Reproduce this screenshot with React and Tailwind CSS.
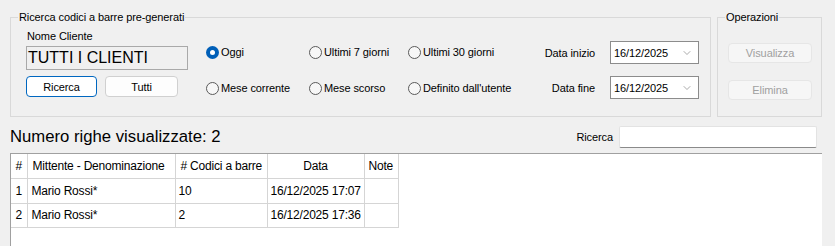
import React from 'react';
import { ChevronDown } from 'lucide-react';

const Radio = ({ checked, label }) => (
    <label className="flex items-center h-[16px] whitespace-nowrap">
        {checked ? (
            <span className="w-[13px] h-[13px] rounded-full bg-[#005fb8] flex items-center justify-center mr-[2px]">
                <span className="w-[5px] h-[5px] rounded-full bg-white" />
            </span>
        ) : (
            <span className="w-[13px] h-[13px] rounded-full border border-[#5a5a5a] bg-[#f7f7f7] mr-[2px]" />
        )}
        <span>{label}</span>
    </label>
);

const DateBox = ({ value }) => (
    <div className="w-[89px] h-[23px] bg-white border border-[#8c8c8c] flex items-center justify-between pl-[3px] pr-[5px]">
        <span>{value}</span>
        <ChevronDown className="w-[12px] h-[12px] text-[#707070]" strokeWidth={1.2} />
    </div>
);

const rows = [
    { n: 1, name: 'Mario Rossi*', count: '10', date: '16/12/2025 17:07', h: 'h-[25px]' },
    { n: 2, name: 'Mario Rossi*', count: '2', date: '16/12/2025 17:36', h: 'h-[24px]' },
];

export default function App() {
    return (
        <div className="w-[835px] h-[246px] bg-[#f0f0f0] overflow-hidden text-[11px] leading-[14px] tracking-[-0.1px] text-black font-['Segoe_UI','Liberation_Sans',Arial,sans-serif]">
            {/* Top group boxes */}
            <div className="flex pt-[9px] pl-[10px] gap-[6px]">
                <fieldset className="w-[701px] h-[108px] border border-[#d9d9d9] pl-[7px]">
                    <legend className="px-[1px] leading-[17px]">Ricerca codici a barre pre-generati</legend>
                    <div className="flex items-start ml-[8px]">
                        <div className="w-[162px] pt-[3px]">
                            <div className="pl-[1px]">Nome Cliente</div>
                            <div className="mt-[3px] h-[24px] border border-[#a9a9a9] bg-[#f0f0f0] flex items-center pl-[1px] text-[16px] leading-[18px] tracking-normal">
                                TUTTI I CLIENTI
                            </div>
                            <div className="flex gap-[8px] mt-[6px]">
                                <button className="w-[71px] h-[21px] rounded-[4px] border border-[#0067c0] bg-white text-[11px]">Ricerca</button>
                                <button className="w-[73px] h-[21px] rounded-[4px] border border-[#d0d0d0] bg-[#fdfdfd] text-[11px]">Tutti</button>
                            </div>
                        </div>
                        <div className="grid grid-cols-[103px_99px_120px] gap-y-[20px] ml-[18px] mt-[18px]">
                            <Radio checked label="Oggi" />
                            <Radio label="Ultimi 7 giorni" />
                            <Radio label="Ultimi 30 giorni" />
                            <Radio label="Mese corrente" />
                            <Radio label="Mese scorso" />
                            <Radio label="Definito dall'utente" />
                        </div>
                        <div className="grid grid-cols-[67px_89px] gap-x-[15px] gap-y-[12px] items-center mt-[15px]">
                            <div className="text-right">Data inizio</div>
                            <DateBox value="16/12/2025" />
                            <div className="text-right">Data fine</div>
                            <DateBox value="16/12/2025" />
                        </div>
                    </div>
                </fieldset>
                <fieldset className="w-[105px] h-[108px] border border-[#d9d9d9] pl-[7px]">
                    <legend className="px-[1px] leading-[17px]">Operazioni</legend>
                    <div className="ml-[3px] mt-[17px] flex flex-col gap-[17px]">
                        <button className="w-[84px] h-[20px] rounded-[4px] border border-[#e6e6e6] bg-[#f6f6f6] text-[#a0a0a0] text-[11px]">Visualizza</button>
                        <button className="w-[84px] h-[20px] rounded-[4px] border border-[#e6e6e6] bg-[#f6f6f6] text-[#a0a0a0] text-[11px]">Elimina</button>
                    </div>
                </fieldset>
            </div>

            {/* Count + search */}
            <div className="flex items-center h-[24px] mt-[8px] pl-[10px] pr-[18px]">
                <div className="text-[16.7px] leading-[18px] tracking-normal flex-1">Numero righe visualizzate: 2</div>
                <div className="mr-[6px]">Ricerca</div>
                <div className="w-[198px] h-[22px] bg-white border border-[#e3e3e3] border-b-[#8a8a8a] rounded-[2px]" />
            </div>

            {/* Grid */}
            <div className="ml-[10px] mt-[4px] w-[812px] h-[100px] bg-white border-t border-l border-[#a0a0a0] text-[12px] tracking-[-0.2px]">
                <table className="border-collapse">
                    <thead>
                        <tr className="h-[24px]">
                            <th className="w-[16px] border-r border-b border-[#d5d5d5] font-normal text-center">#</th>
                            <th className="w-[148px] border-r border-b border-[#d5d5d5] font-normal text-left pl-[5px]">Mittente - Denominazione</th>
                            <th className="w-[92px] border-r border-b border-[#d5d5d5] font-normal text-left pl-[5px]">#&nbsp;Codici a barre</th>
                            <th className="w-[97px] border-r border-b border-[#d5d5d5] font-normal text-center">Data</th>
                            <th className="w-[34px] border-r border-b border-[#d5d5d5] font-normal text-left pl-[4px]">Note</th>
                        </tr>
                    </thead>
                    <tbody>
                        {rows.map((r) => (
                            <tr key={r.n} className={r.h}>
                                <td className="border-r border-b border-[#d5d5d5] text-center">{r.n}</td>
                                <td className="border-r border-b border-[#d5d5d5] pl-[4px]">{r.name}</td>
                                <td className="border-r border-b border-[#d5d5d5] pl-[3px]">{r.count}</td>
                                <td className="border-r border-b border-[#d5d5d5] pl-[3px] whitespace-nowrap">{r.date}</td>
                                <td className="border-r border-b border-[#d5d5d5]"></td>
                            </tr>
                        ))}
                    </tbody>
                </table>
            </div>
        </div>
    );
}
